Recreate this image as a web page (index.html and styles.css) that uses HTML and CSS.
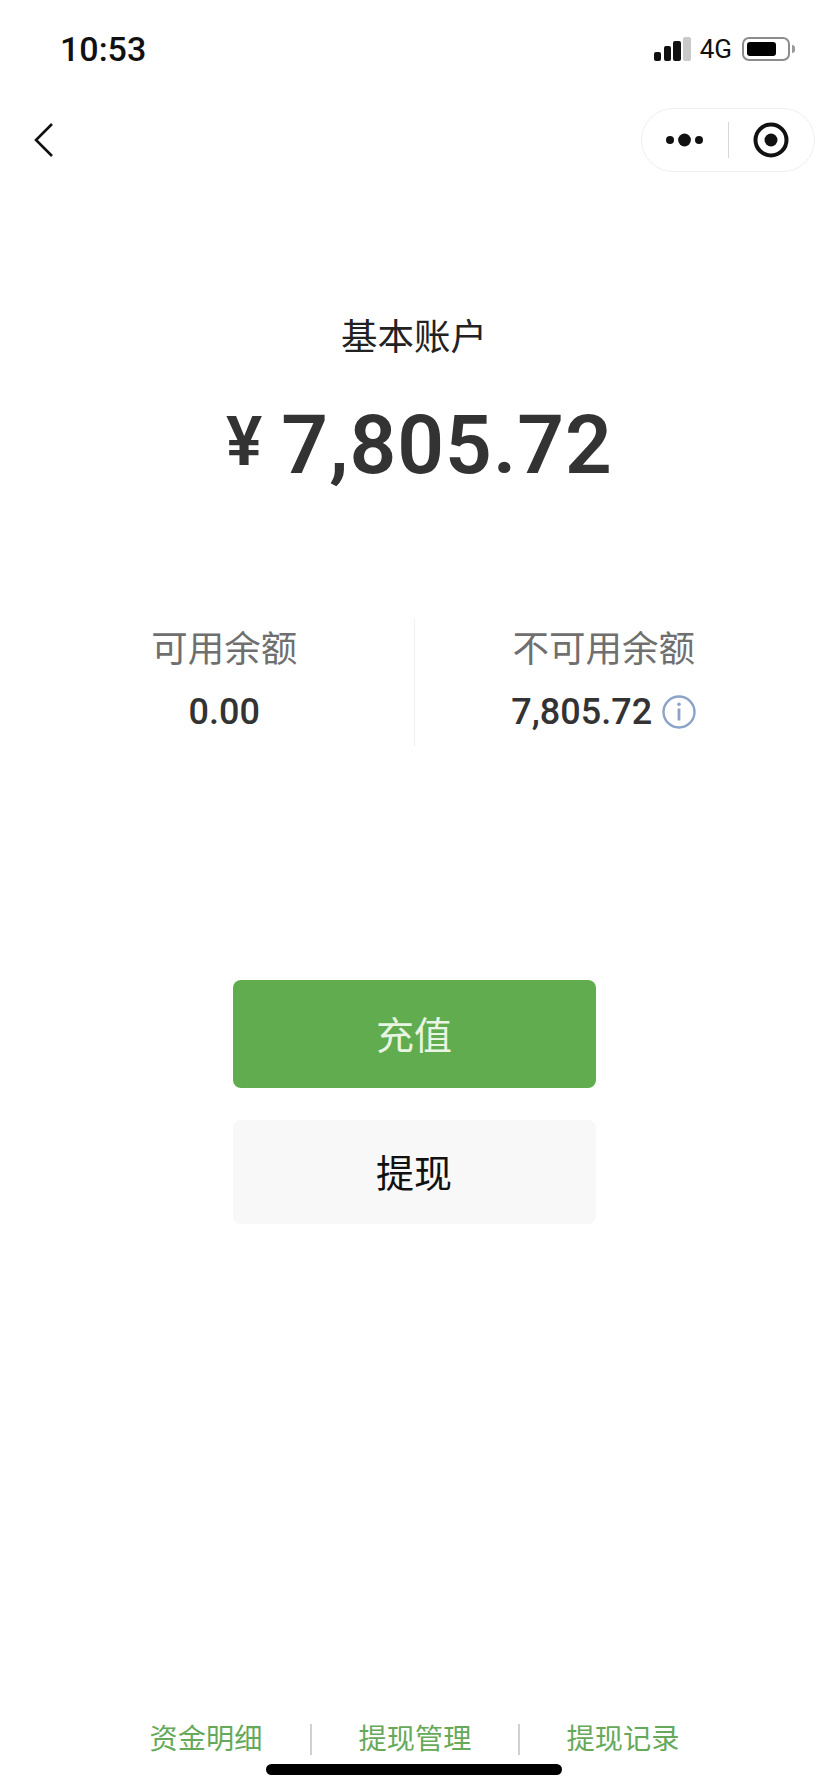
FILE: index.html
```html
<!DOCTYPE html>
<html lang="zh-CN">
<head>
  <meta charset="UTF-8">
  <meta name="viewport" content="width=device-width, initial-scale=1.0">
  <title>基本账户</title>
  <link rel="stylesheet" href="styles.css">
</head>
<body>
  <div class="page">
    <div class="status-bar">
      <span class="time">10:53</span>
      <div class="status-right">
        <div class="signal">
          <i class="bar bar-1"></i>
          <i class="bar bar-2"></i>
          <i class="bar bar-3"></i>
          <i class="bar bar-4"></i>
        </div>
        <span class="network">4G</span>
        <div class="battery"><i class="battery-level"></i></div>
        <i class="battery-tip"></i>
      </div>
    </div>

    <div class="navbar">
      <svg class="back" width="22" height="36" viewBox="0 0 22 36">
        <path d="M19 2 L3 18 L19 34" fill="none" stroke="#111" stroke-width="2.6"/>
      </svg>
      <div class="capsule">
        <div class="capsule-btn">
          <svg width="40" height="16" viewBox="0 0 40 16">
            <circle cx="5" cy="8" r="4" fill="#111"/>
            <circle cx="19.5" cy="8" r="6.4" fill="#111"/>
            <circle cx="34" cy="8" r="4" fill="#111"/>
          </svg>
        </div>
        <div class="capsule-btn capsule-record">
          <svg width="36" height="36" viewBox="0 0 36 36">
            <circle cx="18" cy="18" r="15.5" fill="none" stroke="#111" stroke-width="4"/>
            <circle cx="18" cy="18" r="6.5" fill="#111"/>
          </svg>
        </div>
      </div>
    </div>

    <div class="account">
      <h1 class="account-title">基本账户</h1>
      <div class="account-amount"><span class="currency">¥</span>7,805.72</div>
    </div>

    <div class="balances">
      <div class="balance">
        <div class="balance-label">可用余额</div>
        <div class="balance-value">0.00</div>
      </div>
      <div class="balance balance-frozen">
        <div class="balance-label">不可用余额</div>
        <div class="balance-value">
          7,805.72
          <svg class="info" width="34" height="34" viewBox="0 0 34 34">
            <circle cx="17" cy="17" r="15.5" fill="none" stroke="#8ba3c7" stroke-width="2.4"/>
            <rect x="15.6" y="13.5" width="2.8" height="12" fill="#8ba3c7"/>
            <circle cx="17" cy="9.3" r="1.8" fill="#8ba3c7"/>
          </svg>
        </div>
      </div>
    </div>

    <div class="actions">
      <button class="btn btn-primary">充值</button>
      <button class="btn btn-default">提现</button>
    </div>

    <div class="links">
      <a class="link">资金明细</a>
      <a class="link">提现管理</a>
      <a class="link">提现记录</a>
    </div>

    <div class="home-indicator"></div>
  </div>
</body>
</html>
```

FILE: styles.css
```css
* {
  box-sizing: border-box;
}

body {
  margin: 0;
  background-color: #fff;
  color: #111;
  font-family: Roboto, "Noto Sans CJK SC", sans-serif;
}

.page {
  display: flex;
  flex-direction: column;
  height: 1792px;
  overflow: hidden;
}

/* status bar */
.status-bar {
  display: flex;
  justify-content: space-between;
  align-items: center;
  height: 98px;
  padding: 0 33px 0 60px;
}

.time {
  font-size: 34px;
  font-weight: 500;
  color: #111;
}

.status-right {
  display: flex;
  align-items: center;
}

.signal {
  display: flex;
  align-items: flex-end;
  gap: 2.5px;
  height: 24px;
  width: 37px;
}

.bar {
  width: 7.5px;
  border-radius: 2px;
  background-color: #111;
}

.bar-1 { height: 9px; }
.bar-2 { height: 15px; }
.bar-3 { height: 20px; }
.bar-4 { height: 24px; background-color: #c9c9c9; }

.network {
  margin-left: 9px;
  font-size: 26px;
  color: #111;
}

.battery {
  margin-left: 10px;
  width: 48px;
  height: 24px;
  padding: 3px;
  border: 2px solid #8c8c8c;
  border-radius: 7px;
}

.battery-level {
  display: block;
  width: 29px;
  height: 100%;
  border-radius: 3px;
  background-color: #000;
}

.battery-tip {
  width: 3px;
  height: 8px;
  margin-left: 2px;
  border-radius: 0 3px 3px 0;
  background-color: #9a9a9a;
}

/* nav bar */
.navbar {
  display: flex;
  justify-content: space-between;
  align-items: center;
  height: 64px;
  margin-top: 10px;
  padding: 0 13px 0 33px;
}

.capsule {
  display: flex;
  align-items: center;
  width: 174px;
  height: 64px;
  border: 1px solid #efefef;
  border-radius: 32px;
}

.capsule-btn {
  display: flex;
  justify-content: center;
  align-items: center;
  flex: 1;
  height: 36px;
}

.capsule-record {
  border-left: 1px solid #d8d8d8;
}

/* account */
.account {
  margin-top: 141px;
  text-align: center;
}

.account-title {
  margin: 0;
  font-size: 36.5px;
  font-weight: 400;
  line-height: 50px;
  color: #222;
}

.account-amount {
  margin-top: 27px;
  padding-left: 11px;
  font-size: 82px;
  font-weight: 600;
  line-height: 104px;
  letter-spacing: 1px;
  color: #333;
}

.currency {
  margin-right: 18px;
  font-size: 68px;
  vertical-align: 8px;
}

/* balances */
.balances {
  display: flex;
  margin-top: 122px;
  padding: 0 35px;
}

.balance {
  flex: 1;
  height: 127px;
  padding-top: 7px;
  text-align: center;
}

.balance-frozen {
  border-left: 1px solid #f0f0f0;
}

.balance-label {
  font-size: 36.5px;
  line-height: 48px;
  color: #6f6f6f;
}

.balance-value {
  display: flex;
  justify-content: center;
  align-items: center;
  gap: 10px;
  margin-top: 16px;
  font-size: 36px;
  font-weight: 500;
  line-height: 44px;
  color: #333;
}

/* buttons */
.actions {
  display: flex;
  flex-direction: column;
  align-items: center;
  margin-top: 234px;
}

.btn {
  width: 363px;
  border: none;
  border-radius: 8px;
  font-family: inherit;
  font-size: 38px;
}

.btn-primary {
  height: 108px;
  padding-bottom: 4px;
  background-color: #62ac50;
  color: #e8f5e2;
}

.btn-default {
  height: 104px;
  margin-top: 32px;
  padding-bottom: 4px;
  background-color: #f8f8f8;
  color: #111;
}

/* bottom links */
.links {
  display: flex;
  justify-content: center;
  margin-top: auto;
}

.link {
  width: 208px;
  height: 31px;
  border-left: 2px solid #d0d0d0;
  font-size: 28.2px;
  line-height: 31px;
  text-align: center;
  color: #66a95a;
}

.link:first-child {
  border-left: none;
}

.home-indicator {
  align-self: center;
  width: 296px;
  height: 11px;
  margin: 9px 0 17px;
  border-radius: 6px;
  background-color: #000;
}
```
